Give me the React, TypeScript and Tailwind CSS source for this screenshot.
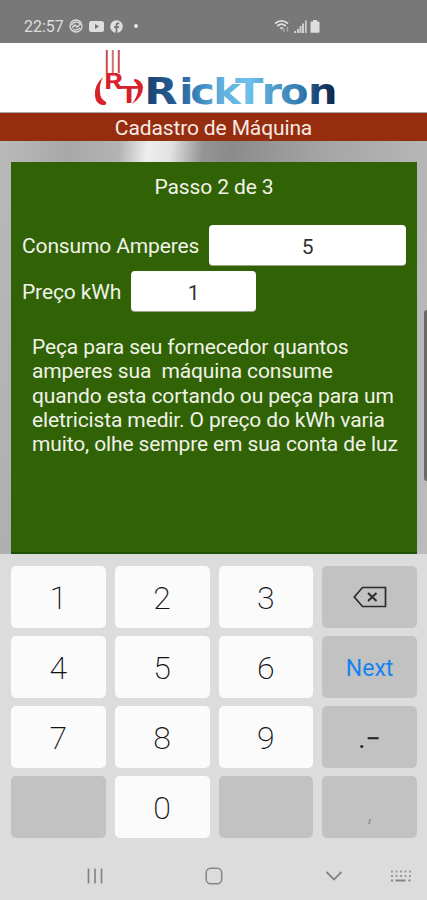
import React from "react";

interface KeyItem {
  label: string;
  variant: "digit" | "delete" | "next" | "symbol" | "comma" | "empty";
}

const keys: KeyItem[] = [
  { label: "1", variant: "digit" },
  { label: "2", variant: "digit" },
  { label: "3", variant: "digit" },
  { label: "", variant: "delete" },
  { label: "4", variant: "digit" },
  { label: "5", variant: "digit" },
  { label: "6", variant: "digit" },
  { label: "Next", variant: "next" },
  { label: "7", variant: "digit" },
  { label: "8", variant: "digit" },
  { label: "9", variant: "digit" },
  { label: ".−", variant: "symbol" },
  { label: "", variant: "empty" },
  { label: "0", variant: "digit" },
  { label: "", variant: "empty" },
  { label: ",", variant: "comma" },
];

const keyStyles: Record<KeyItem["variant"], string> = {
  digit: "bg-[#fbfbfb] text-[32px] font-extralight text-[#111] pt-[2px]",
  delete: "bg-[#c2c2c2] text-[#2b2b2b]",
  next: "bg-[#c2c2c2] text-[23px] text-[#1583ee] pt-[5px]",
  symbol: "bg-[#c2c2c2] text-[27px] text-[#222] pt-[5px]",
  comma: "bg-[#c2c2c2] text-[24px] font-light text-[#8c8c8c] pt-3",
  empty: "bg-[#c2c2c2]",
};

const StatusBar: React.FC = () => (
  <div className="flex h-[43px] shrink-0 items-end bg-[#787878] pb-[8px] pl-[24px] text-[#dedede]">
    <span className="w-[40px] text-[16px] leading-[16px]">22:57</span>
    <svg className="ml-[5px] mb-[2px]" width="14" height="14" viewBox="0 0 14 14" fill="none" stroke="currentColor">
      <circle cx="7" cy="7" r="6" strokeWidth="1.3" />
      <path d="M2.5 6.5Q3.5 3.5 7 3.2T11.5 6M3 9l3-3 2 2 3-2.5M4 10.7q3.5 1.3 6.8-1.7" strokeWidth="1.3" />
    </svg>
    <svg className="ml-[6px] mb-[2px]" width="15" height="13" viewBox="0 0 15 13">
      <rect y="1" width="15" height="11" rx="2.5" fill="currentColor" />
      <path d="M6 4v5l4-2.5z" fill="#707070" />
    </svg>
    <svg className="ml-[6px] mb-[2px]" width="13" height="13" viewBox="0 0 13 13">
      <circle cx="6.5" cy="6.5" r="6.3" fill="currentColor" />
      <path d="M5.6 13V8H4V6.2h1.6V5q0-2.4 2.3-2.4h1.4v1.7h-1q-.9 0-.9.9v1h1.8L8.9 8H7.4v5z" fill="#787878" />
    </svg>
    <span className="ml-[11px] mb-[7px] size-[4px] rounded-full bg-[#e5e5e5]" />
    <svg className="ml-[136px] mb-[1px]" width="18" height="15" viewBox="0 0 18 15" fill="none" stroke="currentColor">
      <path d="M1 4.5Q7.5-.8 14 4.5M3.3 7Q7.5 3.3 11.7 7" strokeWidth="1.8" />
      <path d="M5.5 8.2h4L7.7 11z" fill="currentColor" stroke="none" />
      <path d="M10 9.5v3.5M13.5 8v4.5" strokeWidth="1.5" opacity=".5" />
    </svg>
    <svg className="ml-[2px] mb-[2px]" width="13" height="13" viewBox="0 0 13 13" fill="currentColor">
      <path d="M0 11h2v2H0zM3 9h2v4H3zM5.5 6h2v7h-2zM8 3.5h2V13H8zM11 .5h1.7V13H11z" opacity=".85" />
    </svg>
    <svg className="ml-[3px] mb-[2px]" width="10" height="14" viewBox="0 0 10 14" fill="currentColor">
      <path d="M3 1h4v1.5h1.5q1 0 1 1V13q0 .8-1 .8h-7q-1 0-1-.8V3.5q0-1 1-1H3z" />
    </svg>
  </div>
);

const Logo: React.FC = () => (
  <svg width="427" height="69" viewBox="0 0 427 69" className="block">
    <defs>
      <linearGradient id="word" gradientUnits="userSpaceOnUse" x1="126.5" y1="0" x2="284.6" y2="0">
        <stop offset="0" stopColor="#1d4475" />
        <stop offset=".17" stopColor="#286199" />
        <stop offset=".3" stopColor="#428fc8" />
        <stop offset=".4" stopColor="#62b0dd" />
        <stop offset=".54" stopColor="#6fc0ea" />
        <stop offset=".68" stopColor="#4e9dca" />
        <stop offset=".84" stopColor="#3176ad" />
        <stop offset=".91" stopColor="#1d4777" />
        <stop offset="1" stopColor="#112b4d" />
      </linearGradient>
      <linearGradient id="bars" x1="0" y1="0" x2="0" y2="1">
        <stop offset="0" stopColor="#b9555a" />
        <stop offset="1" stopColor="#e04348" />
      </linearGradient>
    </defs>
    <g fill="url(#bars)">
      <rect x="105.8" y="7" width="2" height="23" />
      <rect x="111.8" y="7" width="2" height="23" opacity=".8" />
      <rect x="117.8" y="7" width="2" height="23" />
    </g>
    <g fill="#d8222b">
      <path d="M103 34Q94 42 95 53Q96 61 102 62H105Q107 61 106 59Q100 56 100 49Q99 42 103 34Z" />
      <path d="M134 36Q141 36 143 44Q143 54 132 61Q137 54 138 48Q139 42 134 38Z" />
      <text transform="scale(1.35 1)" y="46" fontFamily="Inter, sans-serif" fontWeight="700">
        <tspan x="77.2" fontSize="21">R</tspan>
        <tspan x="88" y="60.5" fontSize="23">T</tspan>
      </text>
    </g>
    <text
      transform="scale(1.17 1)"
      y="61"
      fontFamily="'DejaVu Sans', sans-serif"
      fontWeight="700"
      fontSize="35.5"
      fill="url(#word)"
    >
      <tspan x="123.2" fontSize="37">R</tspan>
      <tspan x="153.2 162.6 182.3 200.8 223.5 239.3 263.2">ickTron</tspan>
    </text>
  </svg>
);

const DeleteIcon: React.FC = () => (
  <svg width="34" height="22" viewBox="0 0 34 22" fill="none" stroke="currentColor" strokeWidth="1.7">
    <path d="M9.5 1.5H32.5V20.5H9.5L1.3 11Z" />
    <path d="M15 7l8.5 8M23.5 7L15 15" strokeWidth="2" />
  </svg>
);

const Keypad: React.FC = () => (
  <div className="grid grid-cols-4 gap-x-[9px] gap-y-[8px] pl-[11px] pr-[10px] pt-[12px]">
    {keys.map((k, idx) => (
      <button
        key={idx}
        className={`flex h-[62px] items-center justify-center rounded-[5px] ${keyStyles[k.variant]}`}
      >
        {k.variant === "delete" ? <DeleteIcon /> : k.label}
      </button>
    ))}
  </div>
);

const NavBar: React.FC = () => (
  <div className="mt-auto flex h-[48px] items-center pl-[87px] text-[#858585]">
    <svg width="16" height="16" viewBox="0 0 16 16" stroke="currentColor" strokeWidth="1.7">
      <path d="M1.5 .5v15M8 .5v15M14.5 .5v15" />
    </svg>
    <svg className="ml-[102px]" width="18" height="18" viewBox="0 0 18 18" fill="none" stroke="currentColor" strokeWidth="1.5">
      <rect x="1.2" y="1.2" width="15.5" height="15.5" rx="4.5" />
    </svg>
    <svg className="ml-[102px]" width="18" height="12" viewBox="0 0 18 12" fill="none" stroke="currentColor" strokeWidth="1.8">
      <path d="M1.5 2L9 9.5l7.5-7.5" />
    </svg>
    <svg className="ml-[47px]" width="21" height="12" viewBox="0 0 21 12" fill="none" stroke="currentColor" strokeWidth="2">
      <path d="M1 1.5h20M1 6h20" strokeDasharray="2 2.5" opacity=".75" />
      <path d="M1 10.5h2M5.5 10.5h10M18.5 10.5h2" />
    </svg>
  </div>
);

const fieldStyle =
  "min-w-0 rounded-[4px] border-b border-[#9aa58c] bg-white pt-[3px] text-center text-[21px] text-[#333] outline-none";

export default function App() {
  return (
    <div className="relative flex h-[900px] w-[427px] flex-col overflow-hidden bg-[#dcdcdc] font-['Roboto',sans-serif]">
      <StatusBar />
      <header className="h-[70px] shrink-0 bg-white border-b border-[#aaa]">
        <Logo />
      </header>
      <h1 className="h-[28px] shrink-0 bg-[#962d0e] text-center text-[21px] leading-[31px] tracking-[-0.13px] text-[#f6ebe5]">
        Cadastro de Máquina
      </h1>
      <main className="h-[413px] shrink-0 bg-[linear-gradient(95deg,#bababa_0%,#a8a8a8_15%,#b4b4b4_26%,#eeeeee_32%,#e2e2e2_37%,#949494_44%,#8b8b8b_50%,#a5a5a5_70%,#bcbcbc_100%)] pl-[11px] pr-[10px] pt-[21px]">
        <section className="h-full border-b-2 border-[#1b5105] bg-[#316205] px-[11px] pt-[13px] text-[21px] tracking-[-0.13px] text-[#f0f3e8]">
          <h2 className="text-center leading-[24px]">Passo 2 de 3</h2>
          <label className="mt-[26px] flex h-[41px] items-center">
            <span className="w-[187px] shrink-0 pt-[3px]">Consumo Amperes</span>
            <input className={`h-[41px] w-[198px] ${fieldStyle}`} defaultValue="5" />
          </label>
          <label className="mt-[5px] flex h-[41px] items-center">
            <span className="w-[109px] shrink-0 pt-[3px]">Preço kWh</span>
            <input className={`h-[41px] w-[125px] ${fieldStyle}`} defaultValue="1" />
          </label>
          <p className="mt-[23px] whitespace-pre pl-[10px] leading-[24.3px]">
            {"Peça para seu fornecedor quantos\namperes sua  máquina consume\nquando esta cortando ou peça para um\neletricista medir. O preço do kWh varia\nmuito, olhe sempre em sua conta de luz"}
          </p>
        </section>
      </main>
      {/* scroll indicator */}
      <div className="absolute right-0 top-[310px] h-[171px] w-[3px] rounded-l bg-[#696969]" />
      <Keypad />
      <NavBar />
    </div>
  );
}
